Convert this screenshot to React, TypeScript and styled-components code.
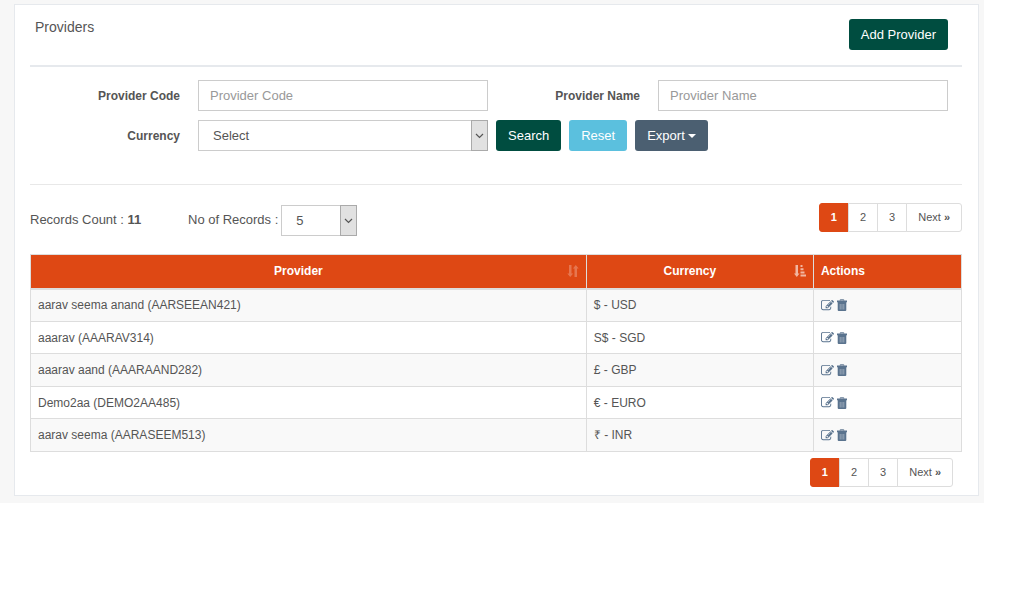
import React from "react";
import styled, { createGlobalStyle, css } from "styled-components";

const GlobalStyle = createGlobalStyle`
  * { box-sizing: border-box; }
  body {
    margin: 0;
    background: #fff;
    color: #555;
    font-family: "Liberation Sans", Arial, Helvetica, sans-serif;
    font-size: 13px;
    line-height: 18px;
  }
  button, input, select { font: inherit; color: inherit; margin: 0; }
`;

const Page = styled.main`
  margin-right: 40px;
  padding: 4px 5px 7px 14px;
  background: #f7f7f7;
`;

const Panel = styled.section`
  padding: 0 16px 8px 15px;
  background: #fff;
  border: 1px solid #e6e9ed;
`;

const PanelHeader = styled.header`
  display: flex;
  justify-content: space-between;
  align-items: flex-start;
  padding: 14px 14px 15px 5px;
  border-bottom: 2px solid #e6e9ed;
`;

const Title = styled.h1`
  margin: 0;
  font-size: 14px;
  line-height: 16px;
  font-weight: 400;
`;

const tones = { primary: "#004d40", info: "#5bc0de", slate: "#4b5f71" };

const Button = styled.button<{ $tone: keyof typeof tones }>`
  display: inline-flex;
  align-items: center;
  gap: 3px;
  height: 31px;
  padding: 0 12px;
  border: 0;
  border-radius: 3px;
  background: ${(p) => tones[p.$tone]};
  color: #fff;
  cursor: pointer;
`;

const Caret = styled.span`
  border-top: 4px solid currentColor;
  border-left: 4px solid transparent;
  border-right: 4px solid transparent;
`;

const Filters = styled.form`
  display: grid;
  grid-template-columns: 1fr 1fr;
  gap: 9px 2px;
  padding: 13px 14px 33px 0;
  border-bottom: 1px solid #e8e8e8;
`;

const Field = styled.div`
  display: grid;
  grid-template-columns: 150fr 290fr;
  column-gap: 18px;
  align-items: center;
`;

const FieldLabel = styled.label`
  text-align: right;
  font-size: 12px;
  font-weight: 700;
`;

const control = css`
  width: 100%;
  height: 31px;
  border: 1px solid #ccc;
  border-radius: 0;
  background: #fff;
`;

const TextInput = styled.input`
  ${control}
  padding: 0 11px;
  &::placeholder { color: #999; opacity: 1; }
`;

const SelectBox = styled.div<{ $compact?: boolean }>`
  display: grid;
  grid-template-columns: 1fr 17px;
  width: ${(p) => (p.$compact ? "76px" : "auto")};
`;

const Select = styled.select`
  ${control}
  grid-area: 1 / 1 / 2 / 3;
  appearance: none;
  padding: 0 14px;
`;

const SelectArrow = styled.span`
  grid-area: 1 / 2;
  z-index: 1;
  display: flex;
  align-items: center;
  justify-content: center;
  border: 1px solid #aaa;
  background: #e1e1e1;
  pointer-events: none;
`;

const Actions = styled.div`
  display: flex;
  gap: 8px;
  padding-left: 6px;
`;

const Toolbar = styled.div`
  display: flex;
  align-items: flex-start;
  padding: 18px 0 18px;
`;

const Count = styled.div`
  padding-top: 8px;
  width: 158px;
`;

const PageSize = styled.div`
  display: flex;
  flex: 1;
  gap: 3px;
  padding-top: 2px;
`;

const PageSizeLabel = styled.label`
  padding-top: 6px;
`;

const Pages = styled.nav<{ $inset?: boolean }>`
  display: flex;
  justify-content: flex-end;
  padding: ${(p) => (p.$inset ? "6px 9px 0 0" : "0")};
`;

const PageLink = styled.a<{ $active?: boolean }>`
  height: 29px;
  margin-left: -1px;
  padding: 0 11px;
  border: 1px solid ${(p) => (p.$active ? "#de4814" : "#ddd")};
  background: ${(p) => (p.$active ? "#de4814" : "#fff")};
  color: ${(p) => (p.$active ? "#fff" : "#555")};
  font-size: 11px;
  line-height: 27px;
  font-weight: ${(p) => (p.$active ? 700 : 400)};
  text-decoration: none;
  &:first-child { border-radius: 3px 0 0 3px; }
  &:last-child { border-radius: 0 3px 3px 0; }
`;

const Table = styled.table`
  width: 100%;
  table-layout: fixed;
  border-collapse: collapse;
  border: 1px solid #ddd;
  font-size: 12px;
`;

const HeadCell = styled.th<{ $width?: string }>`
  width: ${(p) => p.$width ?? "auto"};
  height: 34px;
  padding: 0 7px;
  border-right: 1px solid #ddd;
  border-bottom: 2px solid #ddd;
  background: #de4814;
  color: #fff;
  text-align: left;
`;

const SortButton = styled.button`
  display: flex;
  align-items: center;
  gap: 8px;
  width: 100%;
  padding: 0;
  border: 0;
  background: none;
  cursor: pointer;
`;

const SortLabel = styled.span`
  flex: 1;
  text-align: center;
`;

const Row = styled.tr`
  height: 32px;
  &:nth-child(odd) {
    height: 33px;
    background: #f9f9f9;
  }
`;

const Cell = styled.td`
  padding: 0 7px;
  border: 1px solid #ddd;
`;

const RowActions = styled.div`
  display: flex;
  align-items: center;
  gap: 3px;
`;

const IconButton = styled.button`
  display: flex;
  padding: 0;
  border: 0;
  background: none;
  color: #5a738e;
  cursor: pointer;
`;

const Chevron = () => (
  <SelectArrow>
    <svg width="9" height="6" viewBox="0 0 9 6" fill="none" stroke="#555" strokeWidth="1.2">
      <path d="M1 1l3.500 3.500L8 1" />
    </svg>
  </SelectArrow>
);

const SortBoth = () => (
  <svg width="12" height="12" viewBox="0 0 12 12" fill="#fff" opacity="0.25">
    <path d="M2 0h2.500v8.500h1.700L3.200 12 0.300 8.500H2zM7.500 12H10V3.500h1.700L8.800 0 5.900 3.500h1.600z" />
  </svg>
);

const SortAscending = () => (
  <svg width="12" height="12" viewBox="0 0 12 12" fill="#fff" opacity="0.6">
    <path d="M1.500 0H4v8.500h1.500L2.800 12 0 8.500h1.500zM6.500 0H8.500v2H6.500zM6.500 3.200h3v2h-3zM6.500 6.400h4v2h-4zM6.500 9.600H12v2H6.500z" />
  </svg>
);

const EditIcon = () => (
  <svg width="13" height="13" viewBox="0 0 1792 1792" fill="currentColor">
    <path d="M888 1184l116-116-152-152-116 116v56h96v96h56zm440-720q-16-16-33 1l-350 350q-17 17-1 33t33-1l350-350q17-17 1-33zm80 594v190q0 119-84.5 203.5t-203.5 84.5h-832q-119 0-203.5-84.5t-84.5-203.5v-832q0-119 84.5-203.5t203.5-84.5h832q63 0 117 25 15 7 18 23 3 17-9 29l-49 49q-14 14-32 8-23-6-45-6h-832q-66 0-113 47t-47 113v832q0 66 47 113t113 47h832q66 0 113-47t47-113v-126q0-13 9-22l64-64q15-15 35-7t20 29zm-96-738l288 288-672 672h-288v-288zm444 132l-92 92-288-288 92-92q28-28 68-28t68 28l152 152q28 28 28 68t-28 68z" />
  </svg>
);

const TrashIcon = () => (
  <svg width="10" height="12" viewBox="0 0 10 12">
    <path d="M3.200 1.500V0.800h3.600v0.700" fill="none" stroke="currentColor" />
    <path d="M0 1.500h10v1.700H0zM0.700 3.200h8.600V11a1 1 0 0 1-1 1H1.700a1 1 0 0 1-1-1z" fill="currentColor" />
    <path d="M3.200 5v5.500M5 5v5.500M6.800 5v5.500" stroke="#fff" strokeWidth="0.700" opacity="0.550" />
  </svg>
);

const providers = [
  { name: "aarav seema anand (AARSEEAN421)", currency: "$ - USD" },
  { name: "aaarav (AAARAV314)", currency: "S$ - SGD" },
  { name: "aaarav aand (AAARAAND282)", currency: "£ - GBP" },
  { name: "Demo2aa (DEMO2AA485)", currency: "€ - EURO" },
  { name: "aarav seema (AARASEEM513)", currency: "₹ - INR" },
];

const Pagination = ({ inset }: { inset?: boolean }) => (
  <Pages $inset={inset}>
    <PageLink href="#1" $active>1</PageLink>
    <PageLink href="#2">2</PageLink>
    <PageLink href="#3">3</PageLink>
    <PageLink href="#next">Next <b>»</b></PageLink>
  </Pages>
);

export default function App() {
  return (
    <>
      <GlobalStyle />
      <Page>
        <Panel>
          <PanelHeader>
            <Title>Providers</Title>
            <Button type="button" $tone="primary">Add Provider</Button>
          </PanelHeader>

          <Filters onSubmit={(e) => e.preventDefault()}>
            <Field>
              <FieldLabel htmlFor="code">Provider Code</FieldLabel>
              <TextInput id="code" placeholder="Provider Code" />
            </Field>
            <Field>
              <FieldLabel htmlFor="name">Provider Name</FieldLabel>
              <TextInput id="name" placeholder="Provider Name" />
            </Field>
            <Field>
              <FieldLabel htmlFor="currency">Currency</FieldLabel>
              <SelectBox>
                <Select id="currency">
                  <option>Select</option>
                </Select>
                <Chevron />
              </SelectBox>
            </Field>
            <Actions>
              <Button type="submit" $tone="primary">Search</Button>
              <Button type="reset" $tone="info">Reset</Button>
              <Button type="button" $tone="slate">Export <Caret /></Button>
            </Actions>
          </Filters>

          <Toolbar>
            <Count>Records Count : <b>11</b></Count>
            <PageSize>
              <PageSizeLabel htmlFor="size">No of Records :</PageSizeLabel>
              <SelectBox $compact>
                <Select id="size">
                  <option>5</option>
                </Select>
                <Chevron />
              </SelectBox>
            </PageSize>
            <Pagination />
          </Toolbar>

          <Table>
            <thead>
              <tr>
                <HeadCell $width="59.7%">
                  <SortButton type="button"><SortLabel>Provider</SortLabel><SortBoth /></SortButton>
                </HeadCell>
                <HeadCell $width="24.4%">
                  <SortButton type="button"><SortLabel>Currency</SortLabel><SortAscending /></SortButton>
                </HeadCell>
                <HeadCell>Actions</HeadCell>
              </tr>
            </thead>
            <tbody>
              {providers.map((p) => (
                <Row key={p.name}>
                  <Cell>{p.name}</Cell>
                  <Cell>{p.currency}</Cell>
                  <Cell>
                    <RowActions>
                      <IconButton type="button" aria-label="Edit"><EditIcon /></IconButton>
                      <IconButton type="button" aria-label="Delete"><TrashIcon /></IconButton>
                    </RowActions>
                  </Cell>
                </Row>
              ))}
            </tbody>
          </Table>
          <Pagination inset />
        </Panel>
      </Page>
    </>
  );
}
